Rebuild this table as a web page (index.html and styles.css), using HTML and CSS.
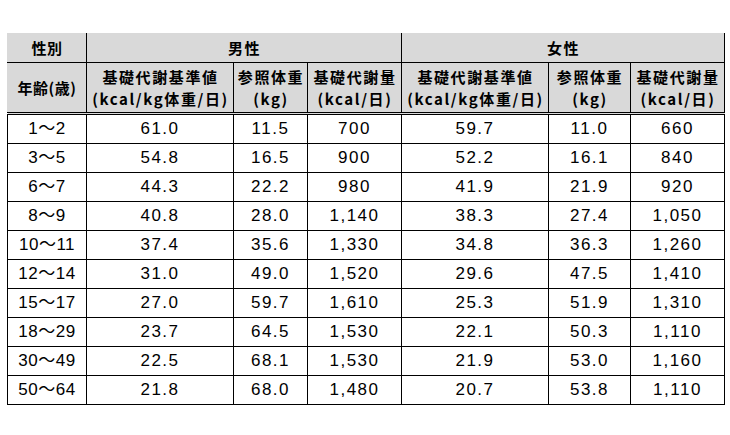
FILE: index.html
```html
<!DOCTYPE html>
<html lang="ja">
<head>
<meta charset="utf-8">
<link rel="stylesheet" href="styles.css">
</head>
<body>
<table class="bmr">
  <colgroup>
    <col class="c-age"><col class="c-std"><col class="c-wt"><col class="c-amt">
    <col class="c-std"><col class="c-wt2"><col class="c-amt">
  </colgroup>
  <thead>
    <tr class="h1">
      <th class="first">性別</th>
      <th colspan="3">男性</th>
      <th colspan="3">女性</th>
    </tr>
    <tr class="h2">
      <th class="first">年齢(歳)</th>
      <th>基礎代謝基準値<br>(kcal/kg体重/日)</th>
      <th>参照体重<br>(kg)</th>
      <th>基礎代謝量<br>(kcal/日)</th>
      <th>基礎代謝基準値<br>(kcal/kg体重/日)</th>
      <th>参照体重<br>(kg)</th>
      <th>基礎代謝量<br>(kcal/日)</th>
    </tr>
  </thead>
  <tbody>
    <tr><td>1～2</td><td>61.0</td><td>11.5</td><td>700</td><td>59.7</td><td>11.0</td><td>660</td></tr>
    <tr><td>3～5</td><td>54.8</td><td>16.5</td><td>900</td><td>52.2</td><td>16.1</td><td>840</td></tr>
    <tr><td>6～7</td><td>44.3</td><td>22.2</td><td>980</td><td>41.9</td><td>21.9</td><td>920</td></tr>
    <tr><td>8～9</td><td>40.8</td><td>28.0</td><td>1,140</td><td>38.3</td><td>27.4</td><td>1,050</td></tr>
    <tr><td>10～11</td><td>37.4</td><td>35.6</td><td>1,330</td><td>34.8</td><td>36.3</td><td>1,260</td></tr>
    <tr><td>12～14</td><td>31.0</td><td>49.0</td><td>1,520</td><td>29.6</td><td>47.5</td><td>1,410</td></tr>
    <tr><td>15～17</td><td>27.0</td><td>59.7</td><td>1,610</td><td>25.3</td><td>51.9</td><td>1,310</td></tr>
    <tr><td>18～29</td><td>23.7</td><td>64.5</td><td>1,530</td><td>22.1</td><td>50.3</td><td>1,110</td></tr>
    <tr><td>30～49</td><td>22.5</td><td>68.1</td><td>1,530</td><td>21.9</td><td>53.0</td><td>1,160</td></tr>
    <tr><td>50～64</td><td>21.8</td><td>68.0</td><td>1,480</td><td>20.7</td><td>53.8</td><td>1,110</td></tr>
  </tbody>
</table>
</body>
</html>
```
FILE: styles.css
```css
html, body {
  margin: 0;
  padding: 0;
  background: #ffffff;
}
body {
  padding: 33px 0 0 7px;
  font-family: "Liberation Sans", "Noto Sans CJK JP", sans-serif;
  color: #000;
}
.bmr {
  border-collapse: collapse;
  table-layout: fixed;
  width: 716px;
}
.c-age { width: 79px; }
.c-std { width: 147px; }
.c-wt { width: 74px; }
.c-wt2 { width: 82px; }
.c-amt { width: 94px; }
.bmr th {
  background: #d9d9d9;
  font-family: "Noto Sans CJK JP", sans-serif;
  font-weight: 700;
  font-size: 15px;
  letter-spacing: 1.6px;
  line-height: 22px;
  border: 1px solid #000;
  padding: 0 0 0 1px;
  text-align: center;
}
.h1 th {
  height: 28px;
  border-top-color: #d9d9d9;
}
.h2 th {
  height: 49px;
  border-bottom: 3px double #000;
}
.bmr th.first {
  border-left-color: #d9d9d9;
  letter-spacing: 0.5px;
  padding: 0;
}
.bmr td {
  border: 1px solid #000;
  height: 28px;
  padding: 0;
  text-align: center;
  font-size: 17px;
  letter-spacing: 1.5px;
  line-height: 20px;
}
.bmr td:first-child {
  letter-spacing: 0.5px;
}
```
